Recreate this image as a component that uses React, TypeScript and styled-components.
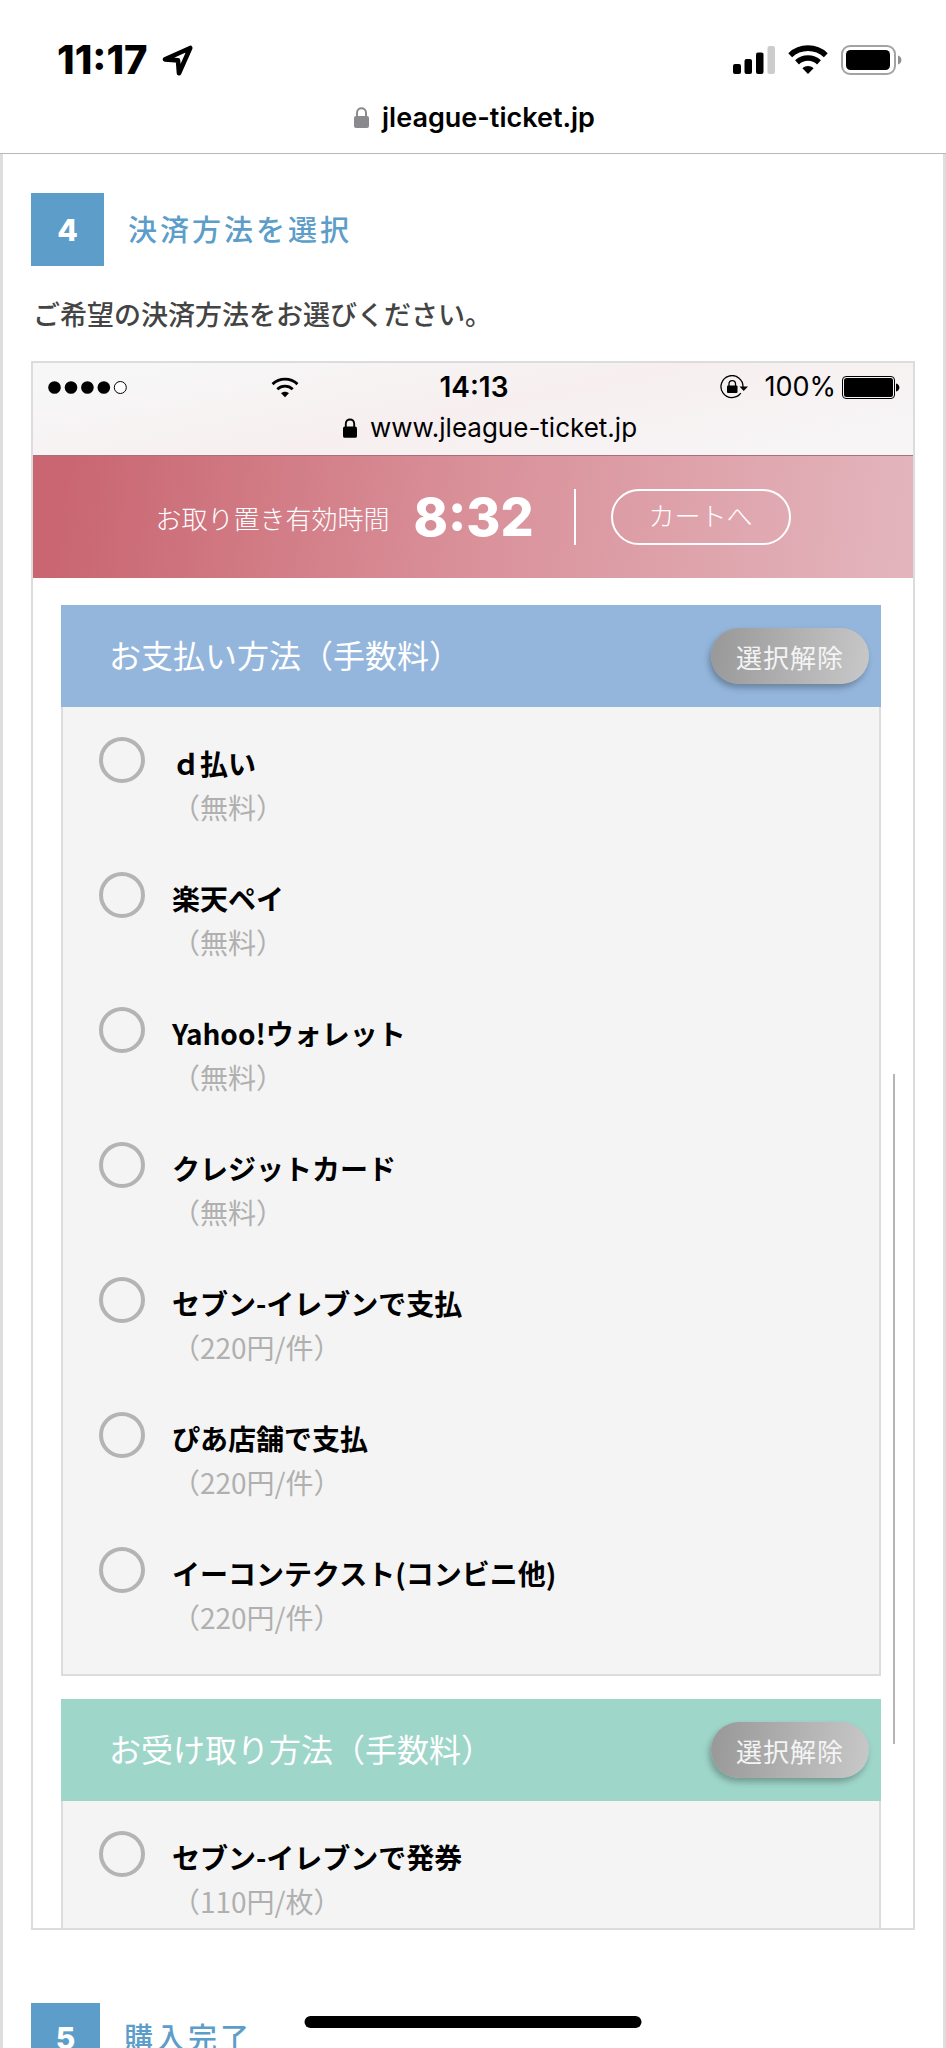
import React from "react";
import styled, { createGlobalStyle } from "styled-components";

const latin = `Inter, "Noto Sans CJK JP", sans-serif`;
const japanese = `"Noto Sans CJK JP", sans-serif`;

const GlobalStyle = createGlobalStyle`
  *, *::before, *::after { box-sizing: border-box; }
  body { margin: 0; background: #fff; color: #000; font-family: ${japanese}; }
  h2, h3, p, ul { margin: 0; padding: 0; }
  ul { list-style: none; }
  svg { display: block; flex: none; }
`;

const Screen = styled.div`
  position: relative;
  display: flex;
  flex-direction: column;
  height: 100vh;
  overflow: hidden;
`;

const BrowserBar = styled.header`
  flex: none;
  padding: 40px 44px 0 57px;
  border-bottom: 1px solid #b9b9b9;
  font-family: ${latin};
`;

const StatusRow = styled.div`
  display: flex;
  align-items: center;
  justify-content: space-between;
  height: 40px;
`;

const Group = styled.div<{ $gap: number }>`
  display: flex;
  align-items: center;
  gap: ${(p) => p.$gap}px;
`;

const Clock = styled.span`
  font-size: 40px;
  font-weight: 800;
  line-height: 40px;
`;

const Address = styled.div`
  display: flex;
  align-items: center;
  justify-content: center;
  gap: 13px;
  height: 73px;
  padding: 2px 10px 0 0;
  font-size: 27px;
  font-weight: 600;
`;

const Page = styled.main`
  flex: 1;
  min-height: 0;
  overflow-y: auto;
  scrollbar-width: none;
  padding: 39px 28px 0;
  border: solid #dedede;
  border-width: 0 3px;
`;

const StepHeading = styled.h2`
  display: flex;
  align-items: center;
  gap: 24px;
  color: #5c9dc9;
  font-size: 29px;
  font-weight: 500;
  line-height: 40px;
  letter-spacing: 3px;
`;

const StepNumber = styled.span<{ $size: number }>`
  display: flex;
  align-items: center;
  justify-content: center;
  width: ${(p) => p.$size}px;
  height: ${(p) => p.$size}px;
  background: #5c9dc9;
  color: #fff;
  font-family: ${latin};
  font-size: 30px;
  font-weight: 800;
  letter-spacing: 0;
`;

const StepTitle = styled.span`
  padding-bottom: 4px;
`;

const Lead = styled.p`
  padding: 28px 2px 27px;
  color: #444;
  font-size: 27px;
  font-weight: 500;
  line-height: 40px;
`;

const Phone = styled.div`
  position: relative;
  margin-bottom: 73px;
  border: 2px solid #dcdcdc;
`;

const PhoneBar = styled.div`
  padding: 8px 13px 0 15px;
  background: linear-gradient(168deg, #f7f7f8 10%, #f7efef 50%, #f7f5f6 90%);
  font-family: ${latin};
  font-size: 27px;
`;

const PhoneStatus = styled.div`
  display: grid;
  grid-template-columns: 1fr auto 1fr;
  align-items: center;
  height: 32px;
  line-height: 32px;
`;

const PhoneTime = styled.span`
  font-size: 28px;
  font-weight: 600;
`;

const PhoneBattery = styled.div`
  display: flex;
  align-items: center;
  justify-content: flex-end;
  gap: 6px;
`;

const PhoneAddress = styled.div`
  display: flex;
  align-items: center;
  justify-content: center;
  gap: 13px;
  height: 52px;
  padding: 0 0 3px 32px;
  font-size: 26px;
`;

const Banner = styled.div`
  display: flex;
  align-items: center;
  justify-content: center;
  height: 123px;
  border-top: 1px solid #a8707a;
  background: linear-gradient(97deg, #c96671 4%, #d98f98 48%, #e3b4bc 98%);
  color: #fff;
  font-size: 26px;
  font-weight: 300;
`;

const Countdown = styled.strong`
  margin: 0 40px 0 24px;
  font-family: ${latin};
  font-size: 52px;
  font-weight: 800;
`;

const CartButton = styled.button`
  width: 180px;
  height: 56px;
  margin-left: 35px;
  padding: 0 0 5px;
  border: 2px solid #fff;
  border-radius: 28px;
  background: transparent;
  color: #fff;
  font: 300 26px ${japanese};
`;

const Divider = styled.span`
  width: 2px;
  height: 56px;
  background: #fff;
`;

const Panels = styled.div`
  display: flex;
  flex-direction: column;
  gap: 23px;
  padding: 27px 32px 0 28px;
`;

const PanelHeader = styled.div<{ $color: string }>`
  display: flex;
  align-items: center;
  justify-content: space-between;
  height: 102px;
  padding: 0 12px 0 48px;
  background: ${(p) => p.$color};
`;

const PanelTitle = styled.h3`
  padding-bottom: 4px;
  color: #fff;
  font-size: 32px;
  font-weight: 400;
  line-height: 40px;
`;

const ClearButton = styled.button`
  width: 158px;
  height: 56px;
  padding: 0;
  border: 0;
  border-radius: 28px;
  background: linear-gradient(100deg, #9a9a9a 5%, #c6c6c6 95%);
  box-shadow: -2px 4px 6px rgba(0, 0, 0, 0.28);
  color: #f4f4f4;
  font: 400 26px ${japanese};
  letter-spacing: 1px;
`;

const OptionList = styled.ul<{ $open: boolean }>`
  display: flex;
  flex-direction: column;
  gap: 43px;
  padding: ${(p) => (p.$open ? "30px 36px 5px" : "30px 36px 35px")};
  border: solid #dcdcdc;
  border-width: ${(p) => (p.$open ? "0 2px" : "0 2px 2px")};
  background: #f4f4f4;
`;

const Option = styled.label`
  display: flex;
  align-items: flex-start;
  gap: 27px;
  font-size: 28px;
  line-height: 44px;
`;

const Radio = styled.input`
  appearance: none;
  flex: none;
  width: 46px;
  height: 46px;
  margin: 0;
  border: 4px solid #b4b4b4;
  border-radius: 50%;

  &:checked {
    background: radial-gradient(circle, #5c9dc9 45%, transparent 50%);
  }
`;

const OptionText = styled.span`
  display: flex;
  flex-direction: column;
  padding-top: 4px;
`;

const OptionName = styled.span`
  font-weight: 700;
`;

const Fee = styled.span`
  color: #b0b0b0;
  font-weight: 400;
`;

const ScrollThumb = styled.span`
  position: absolute;
  top: 711px;
  right: 18px;
  bottom: 184px;
  width: 2px;
  background: #b5b5b5;
`;

const HomeIndicator = styled.div`
  position: absolute;
  bottom: 20px;
  left: 50%;
  width: 337px;
  height: 12px;
  border-radius: 6px;
  background: #000;
  transform: translateX(-50%);
`;

const LocationIcon = () => (
  <svg width="31" height="31" viewBox="0 0 31 31" aria-hidden="true">
    <path d="M3 14.4 28.2 3 17 28.2 16 15.4Z" fill="none" stroke="#000" strokeWidth="4.6" strokeLinejoin="round" />
  </svg>
);

const SignalIcon = () => (
  <svg width="42" height="28" viewBox="0 0 42 28" aria-hidden="true">
    <rect x="0" y="18" width="8" height="10" rx="2" />
    <rect x="11.5" y="13" width="7.5" height="15" rx="2" />
    <rect x="23" y="6.5" width="7.5" height="21.500" rx="2" />
    <rect x="34.500" y="0" width="7.500" height="28" rx="2" fill="#ccc" />
  </svg>
);

const WifiIcon = ({ width, height, thin }: { width: number; height: number; thin?: boolean }) => (
  <svg width={width} height={height} viewBox="0 0 40 30" aria-hidden="true">
    <g fill="none" stroke="#000" strokeWidth={thin ? 4 : 5.6}>
      <path d="M2.200 10.200C12.200 .8 27.800 .8 37.800 10.200" />
      <path d="M9 17.400C15.200 11.600 24.800 11.600 31 17.400" />
    </g>
    <path d="M14.400 23.200C17.600 20.300 22.400 20.300 25.600 23.200L20 29Z" />
  </svg>
);

const BatteryIcon = () => (
  <svg width="61" height="30" viewBox="0 0 61 30" aria-hidden="true">
    <rect x="1" y="1" width="53" height="28" rx="8" fill="none" stroke="#a3a3a3" strokeWidth="2" />
    <rect x="5" y="5" width="44" height="20" rx="4.500" />
    <path d="M57 10.500C61.500 12 61.500 18 57 19.500Z" fill="#8e8e8e" />
  </svg>
);

const SlimBatteryIcon = () => (
  <svg width="58" height="23" viewBox="0 0 58 23" aria-hidden="true">
    <rect x=".5" y=".5" width="52" height="22" rx="3.500" fill="none" stroke="#000" />
    <rect x="2" y="2" width="49" height="19" rx="2.500" />
    <path d="M54 7.500C58.500 8.500 58.500 14.500 54 15.500Z" />
  </svg>
);

const LockIcon = ({ color, width, height }: { color: string; width: number; height: number }) => (
  <svg width={width} height={height} viewBox="0 0 15 21" aria-hidden="true">
    <rect x="0" y="9" width="15" height="12" rx="2" fill={color} />
    <path d="M3 10V6C3-.2 12-.2 12 6V10" fill="none" stroke={color} strokeWidth="2" />
  </svg>
);

const RotationLockIcon = () => (
  <svg width="28" height="24" viewBox="0 0 28 24" aria-hidden="true">
    <path d="M20.800 18.200A11 11 0 1 1 23 12" fill="none" stroke="#000" strokeWidth="1.300" />
    <path d="M19.500 11.500H28L23.700 16Z" />
    <rect x="7" y="10.500" width="10.500" height="7.500" rx="1" />
    <path d="M9 11V8.800C9 4.600 15.500 4.600 15.500 8.800V11" fill="none" stroke="#000" strokeWidth="1.300" />
  </svg>
);

const CarrierDots = () => (
  <svg width="79" height="13" viewBox="0 0 79 13" aria-hidden="true">
    {[6.5, 23, 39.4, 55.8].map((x) => (
      <circle key={x} cx={x} cy="6.500" r="6.300" />
    ))}
    <circle cx="72.300" cy="6.500" r="6" fill="#fff" stroke="#000" />
  </svg>
);

type Choice = { name: string; fee: string };

const payments: Choice[] = [
  { name: "ｄ払い", fee: "（無料）" },
  { name: "楽天ペイ", fee: "（無料）" },
  { name: "Yahoo!ウォレット", fee: "（無料）" },
  { name: "クレジットカード", fee: "（無料）" },
  { name: "セブン-イレブンで支払", fee: "（220円/件）" },
  { name: "ぴあ店舗で支払", fee: "（220円/件）" },
  { name: "イーコンテクスト(コンビニ他)", fee: "（220円/件）" },
];

const pickups: Choice[] = [{ name: "セブン-イレブンで発券", fee: "（110円/枚）" }];

type PanelProps = { id: string; title: string; color: string; choices: Choice[]; open?: boolean };

const ChoicePanel = ({ id, title, color, choices, open = false }: PanelProps) => {
  const [selected, setSelected] = React.useState<string | null>(null);
  return (
    <section role="radiogroup" aria-labelledby={id}>
      <PanelHeader $color={color}>
        <PanelTitle id={id}>{title}</PanelTitle>
        <ClearButton type="button" onClick={() => setSelected(null)}>
          選択解除
        </ClearButton>
      </PanelHeader>
      <OptionList $open={open}>
        {choices.map(({ name, fee }) => (
          <li key={name}>
            <Option>
              <Radio type="radio" name={id} checked={selected === name} onChange={() => setSelected(name)} />
              <OptionText>
                <OptionName>{name}</OptionName>
                <Fee>{fee}</Fee>
              </OptionText>
            </Option>
          </li>
        ))}
      </OptionList>
    </section>
  );
};

export default function App() {
  return (
    <Screen lang="ja">
      <GlobalStyle />
      <BrowserBar>
        <StatusRow>
          <Group $gap={14}>
            <Clock>11:17</Clock>
            <LocationIcon />
          </Group>
          <Group $gap={13}>
            <SignalIcon />
            <WifiIcon width={40} height={30} />
            <BatteryIcon />
          </Group>
        </StatusRow>
        <Address>
          <LockIcon color="#8a8a8e" width={15} height={21} />
          jleague-ticket.jp
        </Address>
      </BrowserBar>

      <Page>
        <StepHeading>
          <StepNumber $size={73}>4</StepNumber>
          <StepTitle>決済方法を選択</StepTitle>
        </StepHeading>
        <Lead>ご希望の決済方法をお選びください。</Lead>

        <Phone>
          <PhoneBar>
            <PhoneStatus>
              <Group $gap={144}>
                <CarrierDots />
                <WifiIcon width={28} height={21} thin />
              </Group>
              <PhoneTime>14:13</PhoneTime>
              <PhoneBattery>
                <Group $gap={16}>
                  <RotationLockIcon />
                  100%
                </Group>
                <SlimBatteryIcon />
              </PhoneBattery>
            </PhoneStatus>
            <PhoneAddress>
              <LockIcon color="#000" width={14} height={20} />
              www.jleague-ticket.jp
            </PhoneAddress>
          </PhoneBar>
          <Banner>
            <span>お取り置き有効時間</span>
            <Countdown>8:32</Countdown>
            <Divider />
            <CartButton type="button">カートへ</CartButton>
          </Banner>
          <Panels>
            <ChoicePanel id="payment" title="お支払い方法（手数料）" color="#94b6dc" choices={payments} />
            <ChoicePanel id="pickup" title="お受け取り方法（手数料）" color="#9fd6ca" choices={pickups} open />
          </Panels>
          <ScrollThumb />
        </Phone>

        <StepHeading>
          <StepNumber $size={69}>5</StepNumber>
          <StepTitle>購入完了</StepTitle>
        </StepHeading>
      </Page>
      <HomeIndicator />
    </Screen>
  );
}
